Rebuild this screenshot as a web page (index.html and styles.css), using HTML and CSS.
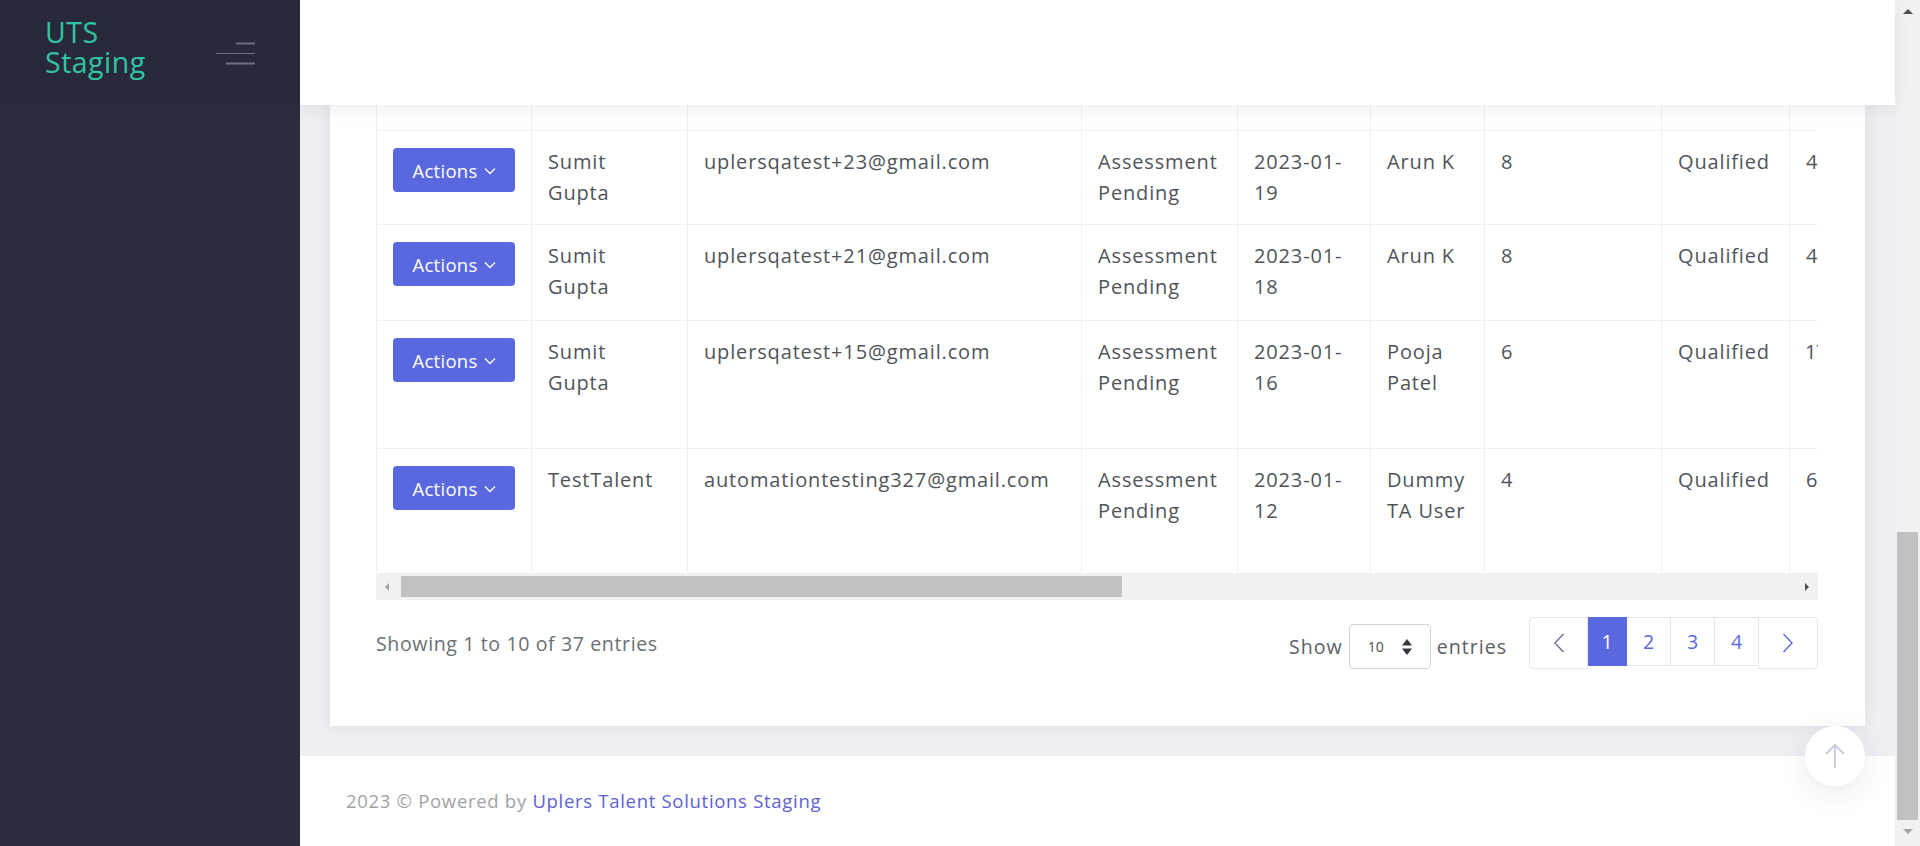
FILE: index.html
```html
<!DOCTYPE html>
<html lang="en">
<head>
<meta charset="utf-8">
<title>UTS Staging</title>
<link rel="stylesheet" href="styles.css">
</head>
<body>
<aside class="sidebar">
  <div class="brand">
    <span class="logo">UTS Staging</span>
    <svg class="burger" width="39" height="26" viewBox="0 0 39 26" aria-hidden="true">
      <line x1="20" y1="3.5" x2="39" y2="3.5" stroke="#6d6f89" stroke-width="2"/>
      <line x1="0" y1="13.5" x2="39" y2="13.5" stroke="#6d6f89" stroke-width="1"/>
      <line x1="10" y1="23.5" x2="39" y2="23.5" stroke="#6d6f89" stroke-width="2"/>
    </svg>
  </div>
  <div class="side-body"></div>
</aside>

<div class="main">
  <header class="topbar"></header>

  <div class="content">
    <section class="card">
      <div class="table-wrap">
        <table class="grid">
          <colgroup>
            <col class="c1"><col class="c2"><col class="c3"><col class="c4"><col class="c5">
            <col class="c6"><col class="c7"><col class="c8"><col class="c9"><col class="c10">
          </colgroup>
          <tbody>
            <tr class="r0"><td></td><td></td><td></td><td></td><td></td><td></td><td></td><td></td><td></td><td></td></tr>
            <tr class="r1">
              <td><button class="btn-actions">Actions <svg width="12" height="8" viewBox="0 0 12 8"><polyline points="1,1.5 6,6.5 11,1.5" fill="none" stroke="#fff" stroke-width="1.3"/></svg></button></td>
              <td><span class="wrap">Sumit Gupta</span></td>
              <td>uplersqatest+23@gmail.com</td>
              <td>Assessment Pending</td>
              <td>2023-01-<wbr>19</td>
              <td>Arun K</td>
              <td>8</td>
              <td>Qualified</td>
              <td>4</td>
              <td></td>
            </tr>
            <tr class="r2">
              <td><button class="btn-actions">Actions <svg width="12" height="8" viewBox="0 0 12 8"><polyline points="1,1.5 6,6.5 11,1.5" fill="none" stroke="#fff" stroke-width="1.3"/></svg></button></td>
              <td><span class="wrap">Sumit Gupta</span></td>
              <td>uplersqatest+21@gmail.com</td>
              <td>Assessment Pending</td>
              <td>2023-01-<wbr>18</td>
              <td>Arun K</td>
              <td>8</td>
              <td>Qualified</td>
              <td>4</td>
              <td></td>
            </tr>
            <tr class="r3">
              <td><button class="btn-actions">Actions <svg width="12" height="8" viewBox="0 0 12 8"><polyline points="1,1.5 6,6.5 11,1.5" fill="none" stroke="#fff" stroke-width="1.3"/></svg></button></td>
              <td><span class="wrap">Sumit Gupta</span></td>
              <td>uplersqatest+15@gmail.com</td>
              <td>Assessment Pending</td>
              <td>2023-01-<wbr>16</td>
              <td>Pooja Patel</td>
              <td>6</td>
              <td>Qualified</td>
              <td class="tight">17</td>
              <td></td>
            </tr>
            <tr class="r4">
              <td><button class="btn-actions">Actions <svg width="12" height="8" viewBox="0 0 12 8"><polyline points="1,1.5 6,6.5 11,1.5" fill="none" stroke="#fff" stroke-width="1.3"/></svg></button></td>
              <td>TestTalent</td>
              <td>automationtesting327@gmail.com</td>
              <td>Assessment Pending</td>
              <td>2023-01-<wbr>12</td>
              <td>Dummy TA User</td>
              <td>4</td>
              <td>Qualified</td>
              <td>6</td>
              <td></td>
            </tr>
          </tbody>
        </table>
      </div>
      <div class="hscroll">
        <span class="arr-left"></span>
        <span class="hthumb"></span>
        <span class="hspace"></span>
        <span class="arr-right"></span>
      </div>

      <div class="dt-foot">
        <div class="info">Showing 1 to 10 of 37 entries</div>
        <div class="dt-right">
          <label class="length">Show
            <span class="select"><span class="sel-val">10</span>
              <svg width="12" height="18" viewBox="0 0 12 18"><polygon points="6,1 11,7.5 1,7.5" fill="#343a40"/><polygon points="6,17 11,10.5 1,10.5" fill="#343a40"/></svg>
            </span>
            entries</label>
          <ul class="pager">
            <li class="pg prev"><svg width="12" height="20" viewBox="0 0 12 20"><polyline points="10.5,1 2,10 10.5,19" fill="none" stroke="#6f7391" stroke-width="1.4"/></svg></li>
            <li class="pg num active">1</li>
            <li class="pg num">2</li>
            <li class="pg num">3</li>
            <li class="pg num">4</li>
            <li class="pg next"><svg width="12" height="20" viewBox="0 0 12 20"><polyline points="1.5,1 10,10 1.5,19" fill="none" stroke="#5b6ae0" stroke-width="1.4"/></svg></li>
          </ul>
        </div>
      </div>
    </section>
  </div>

  <footer class="footer">2023 © Powered by <a class="flink">Uplers Talent Solutions Staging</a></footer>
</div>

<div class="vscroll">
  <span class="arr-up"></span>
  <span class="vthumb"></span>
  <span class="arr-down"></span>
</div>

<a class="to-top" aria-label="Back to top">
  <svg width="22" height="26" viewBox="0 0 22 26"><line x1="11" y1="2" x2="11" y2="25" stroke="#c7c8de" stroke-width="1.8"/><polyline points="2,11 11,2 20,11" fill="none" stroke="#c7c8de" stroke-width="1.8"/></svg>
</a>
</body>
</html>
```

FILE: styles.css
```css
* { box-sizing: border-box; }
html, body { margin: 0; height: 846px; overflow: hidden; }
body {
  display: flex;
  font-family: "Open Sans", "Noto Sans", sans-serif;
  color: #50545a;
  background: #fff;
}

/* sidebar */
.sidebar {
  width: 300px;
  flex: none;
  background: #2b2d3e;
  display: flex;
  flex-direction: column;
  position: relative;
  z-index: 3;
}
.brand {
  height: 105px;
  background: #282a3c;
  display: flex;
  align-items: center;
  justify-content: space-between;
  padding: 0 45px 0 45px;
}
.logo {
  width: 130px;
  color: #2fc4a2;
  font-size: 28.5px;
  line-height: 30px;
  font-weight: 500;
  letter-spacing: 0.5px;
  padding-bottom: 12px;
}
.burger { display: block; margin-top: 1px; }
.side-body { flex: 1; }

/* main column */
.main {
  flex: 1;
  min-width: 0;
  display: flex;
  flex-direction: column;
}
.topbar {
  height: 105px;
  flex: none;
  background: #fff;
  box-shadow: 0 4px 18px rgba(20, 24, 50, 0.07);
  position: relative;
  z-index: 2;
}
.content {
  flex: 1;
  min-height: 0;
  background: #eeeef3;
  padding: 0 30px 30px;
  display: flex;
  flex-direction: column;
}
.card {
  flex: 1;
  min-height: 0;
  background: #fff;
  box-shadow: 0 0 16px rgba(40, 40, 90, 0.09);
  padding: 0 47px 57px 46px;
  display: flex;
  flex-direction: column;
  justify-content: flex-end;
  overflow: hidden;
}

/* table */
.table-wrap {
  width: 1442px;
  overflow: hidden;
  flex: none;
}
.grid {
  table-layout: fixed;
  border-collapse: collapse;
  width: 1783px;
}
.c1 { width: 155px; } .c2 { width: 156px; } .c3 { width: 394px; } .c4 { width: 156px; }
.c5 { width: 133px; } .c6 { width: 114px; } .c7 { width: 177px; } .c8 { width: 128px; }
.c9 { width: 160px; } .c10 { width: 210px; }
.grid td {
  border: 1px solid #eff0f4;
  padding: 16px 16px 0;
  vertical-align: top;
  font-size: 20px;
  line-height: 30.6px;
  letter-spacing: 0.85px;
  overflow: hidden;
}
.grid td.tight { letter-spacing: -0.5px; padding-left: 15px; }
.r0 { height: 97px; }
.r1 { height: 94px; }
.r2 { height: 96px; }
.r3 { height: 128px; }
.r4 { height: 125px; }
.wrap { display: block; max-width: 96px; }

.btn-actions {
  width: 122px;
  height: 44px;
  border: 0;
  border-radius: 4px;
  background: #5a68df;
  color: #fff;
  font-family: inherit;
  font-size: 18.5px;
  font-weight: 500;
  letter-spacing: 0.3px;
  display: flex;
  align-items: center;
  justify-content: center;
  gap: 6px;
  padding: 0;
  margin-top: 1px;
}
.btn-actions svg { margin-top: 2px; }

/* horizontal scrollbar */
.hscroll {
  height: 26px;
  flex: none;
  background: #f1f1f1;
  display: flex;
  align-items: center;
  width: 1442px;
}
.arr-left {
  width: 0; height: 0;
  border-top: 4px solid transparent;
  border-bottom: 4px solid transparent;
  border-right: 4px solid #a3a3a3;
  margin: 0 12px 0 9px;
}
.hthumb {
  width: 721px;
  height: 21px;
  background: #c1c1c1;
  margin-top: -1px;
}
.hspace { flex: 1; }
.arr-right {
  width: 0; height: 0;
  border-top: 4px solid transparent;
  border-bottom: 4px solid transparent;
  border-left: 4px solid #505050;
  margin-right: 9px;
}

/* table footer */
.dt-foot {
  margin-top: 17px;
  height: 52px;
  display: flex;
  justify-content: space-between;
  align-items: flex-start;
  flex: none;
}
.info {
  font-size: 19.6px;
  line-height: 30px;
  padding-top: 12px;
  color: #6b6f76;
  letter-spacing: 0.6px;
}
.dt-right {
  display: flex;
  align-items: flex-start;
}
.length {
  display: flex;
  align-items: center;
  gap: 6px;
  font-size: 19.6px;
  letter-spacing: 1px;
  color: #5c6066;
  margin-top: 7px;
}
.select {
  width: 82px;
  height: 45px;
  border: 1px solid #ced4da;
  border-radius: 4px;
  display: flex;
  align-items: center;
  justify-content: space-between;
  padding: 0 17px 0 18px;
  font-size: 14px;
  letter-spacing: 0;
  color: #495057;
}
.select svg { display: block; }
.pager {
  list-style: none;
  margin: 0 0 0 22px;
  padding: 0;
  display: flex;
  align-items: flex-start;
}
.pg {
  display: flex;
  align-items: center;
  justify-content: center;
  font-size: 19.6px;
  color: #5b6ae0;
  background: #fff;
}
.prev, .next {
  width: 60px;
  height: 52px;
  border: 1px solid #e4e6ea;
}
.prev { border-radius: 4px 0 0 4px; width: 59px; }
.next { border-radius: 0 4px 4px 0; margin-left: -1px; }
.num {
  width: 44px;
  height: 49px;
  border: 1px solid #e4e6ea;
  border-left: 0;
}
.num.active {
  width: 39px;
  background: #5a68df;
  color: #fff;
  border-color: #5a68df;
}

/* footer */
.footer {
  height: 90px;
  flex: none;
  background: #fff;
  padding-left: 46px;
  line-height: 90px;
  font-size: 18.5px;
  color: #a2a2a6;
  letter-spacing: 0.7px;
}
.flink { color: #5d61d2; text-decoration: none; }

/* vertical scrollbar */
.vscroll {
  width: 25px;
  flex: none;
  background: #f1f1f1;
  display: flex;
  flex-direction: column;
  align-items: center;
  padding-top: 9px;
}
.arr-up {
  width: 0; height: 0;
  border-left: 5px solid transparent;
  border-right: 5px solid transparent;
  border-bottom: 5px solid #505050;
}
.vthumb {
  width: 21px;
  height: 288px;
  background: #c1c1c1;
  margin-top: 518px;
}
.arr-down {
  width: 0; height: 0;
  border-left: 5px solid transparent;
  border-right: 5px solid transparent;
  border-top: 5px solid #a3a3a3;
  margin-top: 9px;
}

/* back to top */
.to-top {
  position: fixed;
  left: 1805px;
  top: 726px;
  width: 60px;
  height: 60px;
  border-radius: 50%;
  background: #fff;
  box-shadow: 0 6px 30px rgba(40, 40, 90, 0.10);
  display: flex;
  align-items: center;
  justify-content: center;
  z-index: 5;
}
```
